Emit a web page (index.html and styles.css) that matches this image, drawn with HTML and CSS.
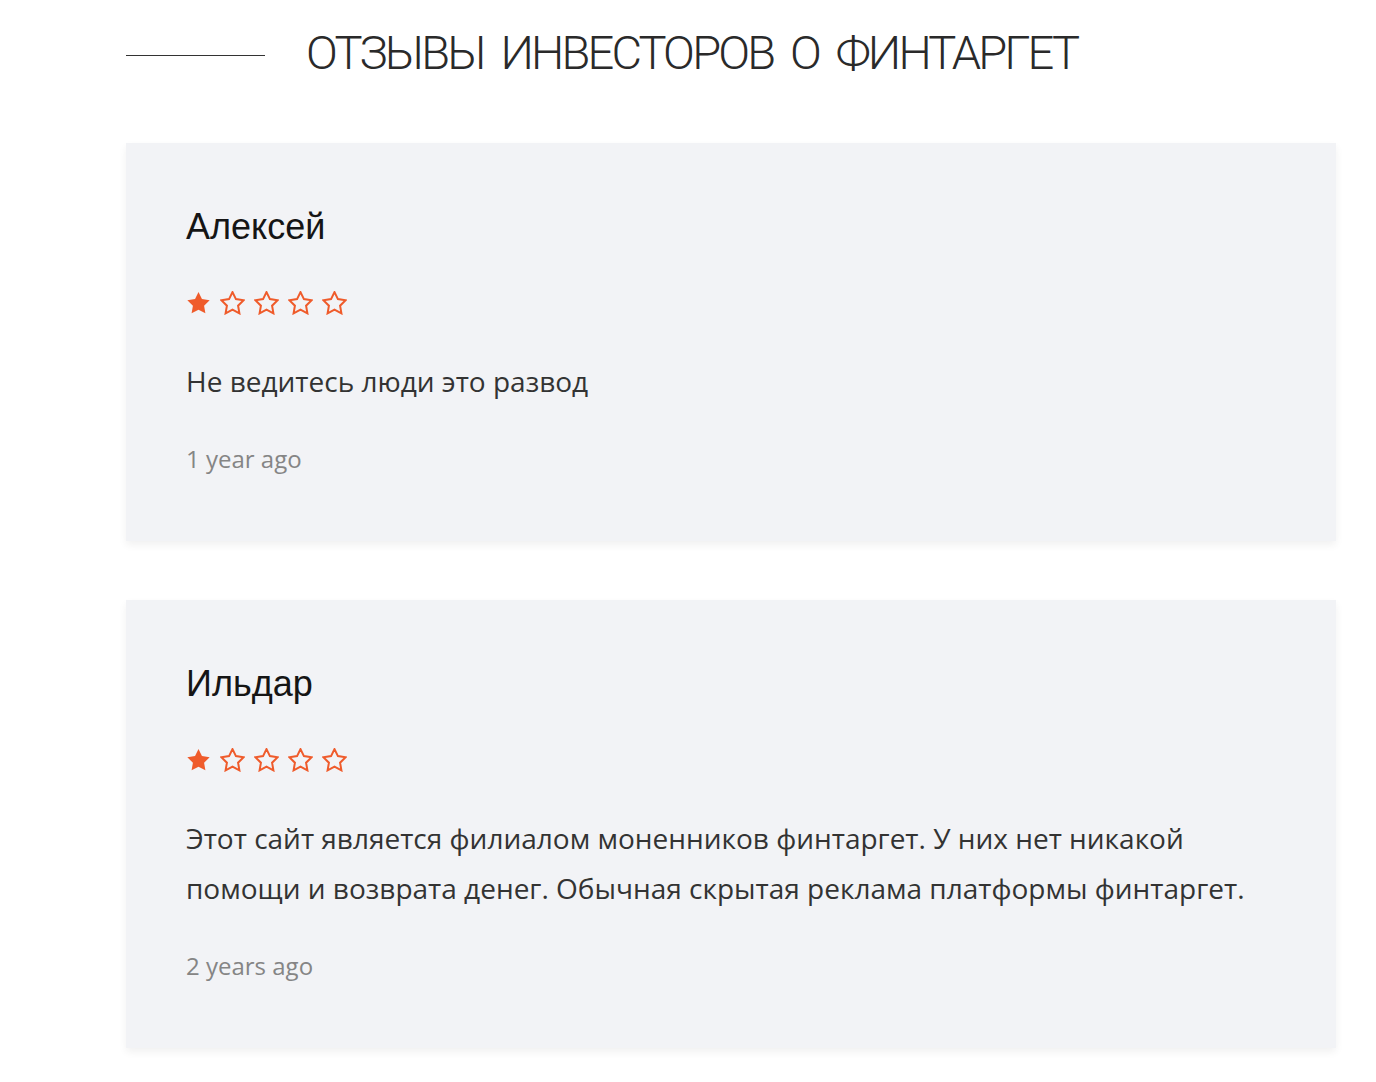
FILE: index.html
```html
<!DOCTYPE html>
<html lang="ru">
<head>
  <meta charset="UTF-8" />
  <meta name="viewport" content="width=device-width, initial-scale=1" />
  <title>Отзывы инвесторов</title>
  <link rel="stylesheet" href="styles.css">
</head>
<body>
  <main class="reviews">
    <div class="reviews-head">
      <span class="head-line"></span>
      <h2 class="head-title">ОТЗЫВЫ ИНВЕСТОРОВ О ФИНТАРГЕТ</h2>
    </div>

    <div class="review-card">
      <div class="review-name">Алексей</div>
      <div class="review-stars">
        <svg class="star" viewBox="1 1 22 21.5"><polygon class="star-full" points="12,2 15.09,8.26 22,9.27 17,14.14 18.18,21.02 12,17.77 5.82,21.02 7,14.14 2,9.27 8.91,8.26"/></svg>
        <svg class="star" viewBox="1 1 22 21.5"><polygon class="star-empty" points="12,2 15.09,8.26 22,9.27 17,14.14 18.18,21.02 12,17.77 5.82,21.02 7,14.14 2,9.27 8.91,8.26"/></svg>
        <svg class="star" viewBox="1 1 22 21.5"><polygon class="star-empty" points="12,2 15.09,8.26 22,9.27 17,14.14 18.18,21.02 12,17.77 5.82,21.02 7,14.14 2,9.27 8.91,8.26"/></svg>
        <svg class="star" viewBox="1 1 22 21.5"><polygon class="star-empty" points="12,2 15.09,8.26 22,9.27 17,14.14 18.18,21.02 12,17.77 5.82,21.02 7,14.14 2,9.27 8.91,8.26"/></svg>
        <svg class="star" viewBox="1 1 22 21.5"><polygon class="star-empty" points="12,2 15.09,8.26 22,9.27 17,14.14 18.18,21.02 12,17.77 5.82,21.02 7,14.14 2,9.27 8.91,8.26"/></svg>
      </div>
      <p class="review-text">Не ведитесь люди это развод</p>
      <div class="review-date">1 year ago</div>
    </div>

    <div class="review-card">
      <div class="review-name">Ильдар</div>
      <div class="review-stars">
        <svg class="star" viewBox="1 1 22 21.5"><polygon class="star-full" points="12,2 15.09,8.26 22,9.27 17,14.14 18.18,21.02 12,17.77 5.82,21.02 7,14.14 2,9.27 8.91,8.26"/></svg>
        <svg class="star" viewBox="1 1 22 21.5"><polygon class="star-empty" points="12,2 15.09,8.26 22,9.27 17,14.14 18.18,21.02 12,17.77 5.82,21.02 7,14.14 2,9.27 8.91,8.26"/></svg>
        <svg class="star" viewBox="1 1 22 21.5"><polygon class="star-empty" points="12,2 15.09,8.26 22,9.27 17,14.14 18.18,21.02 12,17.77 5.82,21.02 7,14.14 2,9.27 8.91,8.26"/></svg>
        <svg class="star" viewBox="1 1 22 21.5"><polygon class="star-empty" points="12,2 15.09,8.26 22,9.27 17,14.14 18.18,21.02 12,17.77 5.82,21.02 7,14.14 2,9.27 8.91,8.26"/></svg>
        <svg class="star" viewBox="1 1 22 21.5"><polygon class="star-empty" points="12,2 15.09,8.26 22,9.27 17,14.14 18.18,21.02 12,17.77 5.82,21.02 7,14.14 2,9.27 8.91,8.26"/></svg>
      </div>
      <p class="review-text">Этот сайт является филиалом моненников финтаргет. У них нет никакой помощи и возврата денег. Обычная скрытая реклама платформы финтаргет.</p>
      <div class="review-date">2 years ago</div>
    </div>
  </main>
</body>
</html>
```

FILE: styles.css
```css
body {
  margin: 0;
  background: #fff;
  font-family: "Open Sans", sans-serif;
  color: #333;
}

.reviews {
  width: 1210px;
  margin-left: 126px;
  padding-top: 25px;
}

/* Heading */
.reviews-head {
  display: flex;
  align-items: center;
  gap: 41px;
  margin-bottom: 62px;
}
.head-line {
  width: 139px;
  height: 1px;
  background: #333;
  margin-top: 4px;
}
.head-title {
  margin: 0;
  font-family: Roboto, "Liberation Sans", sans-serif;
  font-weight: 300;
  font-size: 47px;
  line-height: 56px;
  letter-spacing: -2.8px;
  word-spacing: 8px;
  color: #2a2a2a;
}

/* Cards */
.review-card {
  background: #f2f3f6;
  padding: 64px 60px 67px;
  margin-bottom: 59px;
  box-shadow: 0 4px 8px rgba(0,0,0,0.06);
}

.review-name {
  font-family: "Liberation Sans", Arial, sans-serif;
  font-size: 36px;
  line-height: 40px;
  color: #151515;
}

.review-stars {
  display: flex;
  gap: 9px;
  margin-top: 44px;
  height: 24px;
}
.star {
  width: 25px;
  height: 24px;
}
.star-full {
  fill: #ef5b2b;
}
.star-empty {
  fill: none;
  stroke: #ef5b2b;
  stroke-width: 1.8;
}

.review-text {
  margin: 41px 0 0;
  font-size: 28px;
  line-height: 50px;
  color: #333;
}

.review-date {
  margin-top: 38px;
  font-size: 24px;
  line-height: 30px;
  color: #858585;
}
```
